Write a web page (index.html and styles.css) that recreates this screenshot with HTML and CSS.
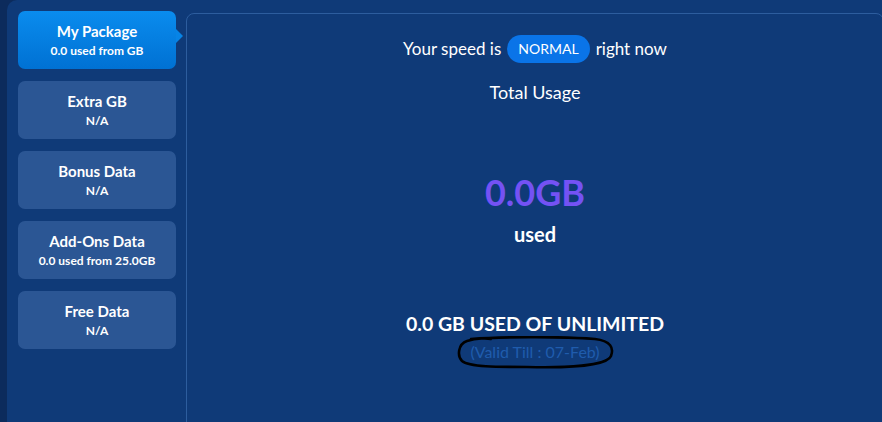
FILE: index.html
```html
<!DOCTYPE html>
<html>
<head>
<meta charset="utf-8">
<link rel="stylesheet" href="styles.css">
</head>
<body>
<div class="app">
  <nav class="sidebar">
    <div class="card active">
      <div class="card-title">My Package</div>
      <div class="card-sub">0.0 used from GB</div>
    </div>
    <div class="card">
      <div class="card-title">Extra GB</div>
      <div class="card-sub">N/A</div>
    </div>
    <div class="card">
      <div class="card-title">Bonus Data</div>
      <div class="card-sub">N/A</div>
    </div>
    <div class="card">
      <div class="card-title">Add-Ons Data</div>
      <div class="card-sub">0.0 used from 25.0GB</div>
    </div>
    <div class="card">
      <div class="card-title">Free Data</div>
      <div class="card-sub">N/A</div>
    </div>
  </nav>
  <main class="panel">
    <div class="speed">Your speed is <span class="pill">NORMAL</span> right now</div>
    <div class="total">Total Usage</div>
    <div class="amount">0.0GB</div>
    <div class="used">used</div>
    <div class="limit">0.0 GB USED OF UNLIMITED</div>
    <div class="valid-row">
      <span class="valid">(Valid Till : 07-Feb)
        <svg class="scribble" width="158" height="34" viewBox="0 0 158 34">
          <path d="M14 3 C40 1 100 0 138 3 C154 5 157 12 154 20 C150 30 108 32 70 31 C40 31 12 31 5 25 C0 20 1 8 10 5 C20 2 30 2 34 3" fill="none" stroke="#000" stroke-width="2.6" stroke-linecap="round"/>
        </svg>
      </span>
    </div>
  </main>
</div>
</body>
</html>
```
FILE: styles.css
```css
html, body {
  margin: 0;
  padding: 0;
  height: 100%;
}
body {
  background: #0c2b5c;
  font-family: Lato, "Open Sans", sans-serif;
  color: #ffffff;
  overflow: hidden;
}
.app {
  margin-left: 7px;
  height: 422px;
  background: #0f3a78;
  border-top-left-radius: 10px;
  display: flex;
  gap: 10px;
  padding: 11px 0 0 11px;
  box-sizing: border-box;
  overflow: hidden;
}
.sidebar {
  width: 158px;
  flex-shrink: 0;
  display: flex;
  flex-direction: column;
  gap: 12px;
}
.card {
  position: relative;
  height: 58px;
  box-sizing: border-box;
  padding-top: 10px;
  background: #2b5694;
  border-radius: 7px;
  text-align: center;
}
.card.active {
  background: linear-gradient(#0a8cee, #0071d3);
}
.card.active::after {
  content: "";
  position: absolute;
  right: -7px;
  top: 18px;
  border-top: 7px solid transparent;
  border-bottom: 7px solid transparent;
  border-left: 7px solid #0784e6;
}
.card-title {
  font-size: 15px;
  font-weight: 700;
  line-height: 20px;
}
.card-sub {
  font-size: 12px;
  font-weight: 700;
  line-height: 16px;
  margin-top: 2px;
}
.panel {
  flex-shrink: 0;
  width: 698px;
  height: 440px;
  margin-top: 2px;
  border: 1px solid #2d5d9e;
  border-radius: 8px;
  box-sizing: border-box;
  display: flex;
  flex-direction: column;
  align-items: center;
  text-align: center;
}
.speed {
  margin-top: 21px;
  height: 28px;
  font-size: 17px;
  line-height: 28px;
  display: flex;
  align-items: center;
  gap: 6px;
}
.pill {
  background: #0a74e8;
  border-radius: 14px;
  height: 28px;
  line-height: 28px;
  padding: 0 11px;
  font-size: 14px;
}
.total {
  margin-top: 19px;
  font-size: 18px;
  line-height: 20px;
}
.amount {
  margin-top: 70px;
  font-size: 36px;
  line-height: 40px;
  font-weight: 700;
  color: #7452f4;
}
.used {
  margin-top: 10px;
  font-size: 20px;
  line-height: 24px;
  font-weight: 700;
}
.limit {
  margin-top: 66px;
  font-size: 19.5px;
  line-height: 24px;
  font-weight: 700;
}
.valid-row {
  margin-top: 7px;
  line-height: 18px;
}
.valid {
  position: relative;
  display: inline-block;
  font-size: 16px;
  line-height: 18px;
  color: #1f5cad;
}
.scribble {
  position: absolute;
  left: -13px;
  top: -7px;
}
```
